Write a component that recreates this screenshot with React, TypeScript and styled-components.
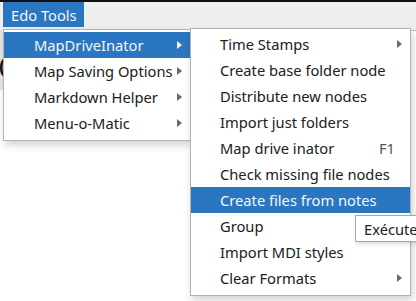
import styled, {createGlobalStyle} from 'styled-components';

const GlobalStyle = createGlobalStyle`
  html, body {
    margin: 0;
    padding: 0;
    background: #ffffff;
  }
  body {
    font-family: 'Noto Sans', 'DejaVu Sans', sans-serif;
  }
`;

type Item = {label: string; sub?: boolean; shortcut?: string; active?: boolean};

const mainItems: Item[] = [
  {label: 'MapDriveInator', sub: true, active: true},
  {label: 'Map Saving Options', sub: true},
  {label: 'Markdown Helper', sub: true},
  {label: 'Menu-o-Matic', sub: true},
];

const driveItems: Item[] = [
  {label: 'Time Stamps', sub: true},
  {label: 'Create base folder node'},
  {label: 'Distribute new nodes'},
  {label: 'Import just folders'},
  {label: 'Map drive inator', shortcut: 'F1'},
  {label: 'Check missing file nodes'},
  {label: 'Create files from notes', active: true},
  {label: 'Group'},
  {label: 'Import MDI styles'},
  {label: 'Clear Formats', sub: true},
];

const App = () => {
  return (
    <Screen>
      <GlobalStyle />
      <TopStrip />
      <MenuBar>
        <BarItem $open>Edo Tools</BarItem>
      </MenuBar>
      <Workspace>
        <Glyph>(</Glyph>
      </Workspace>

      <Popup $left={3} $top={29} $width={188}>
        {mainItems.map((item) => (
          <Row key={item.label} $active={item.active} $indent={30}>
            <Label>{item.label}</Label>
            {item.sub && <Arrow $active={item.active} />}
          </Row>
        ))}
      </Popup>

      <Popup $left={190} $top={28} $width={221}>
        {driveItems.map((item) => (
          <Row key={item.label} $active={item.active} $indent={29}>
            <Label>{item.label}</Label>
            {item.shortcut && <Shortcut>{item.shortcut}</Shortcut>}
            {item.sub && <Arrow $active={item.active} />}
          </Row>
        ))}
      </Popup>

      <Tooltip>Exécute</Tooltip>
    </Screen>
  );
};

const Screen = styled.div`
  position: relative;
  width: 416px;
  height: 301px;
  overflow: hidden;
  background: #ffffff;
  font-size: 14.7px;
  color: #202020;
`;

const TopStrip = styled.div`
  height: 2px;
  background: #111111;
`;

const MenuBar = styled.div`
  display: flex;
  height: 25px;
  padding-left: 3px;
  background: #efefef;
  border-bottom: 3px solid #efefef;
  box-shadow: 0 1px 0 #c4c4c4;
`;

const BarItem = styled.div<{$open?: boolean}>`
  display: flex;
  align-items: center;
  padding: 0 7px 0 8px;
  background: ${({$open}) => ($open ? '#2a76c1' : 'transparent')};
  color: ${({$open}) => ($open ? '#f4f6f8' : '#202020')};
`;

const Workspace = styled.div`
  display: flex;
  align-items: center;
  height: 50px;
  padding-top: 10px;
  border-left: 3px solid #e6e6e6;
`;

const Glyph = styled.span`
  margin-left: -4px;
  font-size: 20px;
  font-weight: 700;
  color: #111;
`;

const Popup = styled.div<{$left: number; $top: number; $width: number}>`
  position: absolute;
  left: ${({$left}) => $left}px;
  top: ${({$top}) => $top}px;
  width: ${({$width}) => $width}px;
  box-sizing: border-box;
  padding: 2px 0 4px;
  background: #ffffff;
  border: 1px solid #b3b3b3;
  box-shadow: 2px 4px 8px rgba(0, 0, 0, 0.18);
`;

const Row = styled.div<{$active?: boolean; $indent: number}>`
  display: flex;
  align-items: center;
  height: 26px;
  padding: 0 8px 0 ${({$indent}) => $indent}px;
  background: ${({$active}) => ($active ? '#2a76c1' : 'transparent')};
  color: ${({$active}) => ($active ? '#f4f6f8' : '#202020')};
  white-space: nowrap;
`;

const Label = styled.span`
  flex: 1;
`;

const Shortcut = styled.span`
  margin-right: 7px;
  color: #555555;
`;

const Arrow = styled.span<{$active?: boolean}>`
  width: 0;
  height: 0;
  border-top: 4px solid transparent;
  border-bottom: 4px solid transparent;
  border-left: 5px solid ${({$active}) => ($active ? '#f4f6f8' : '#6a6a6a')};
`;

const Tooltip = styled.div`
  position: absolute;
  left: 355px;
  top: 215px;
  height: 25px;
  display: flex;
  align-items: center;
  padding: 0 8px;
  background: #ffffff;
  border: 1px solid #a8a8a8;
  box-shadow: 1px 2px 4px rgba(0, 0, 0, 0.15);
  white-space: nowrap;
`;

export default App;
